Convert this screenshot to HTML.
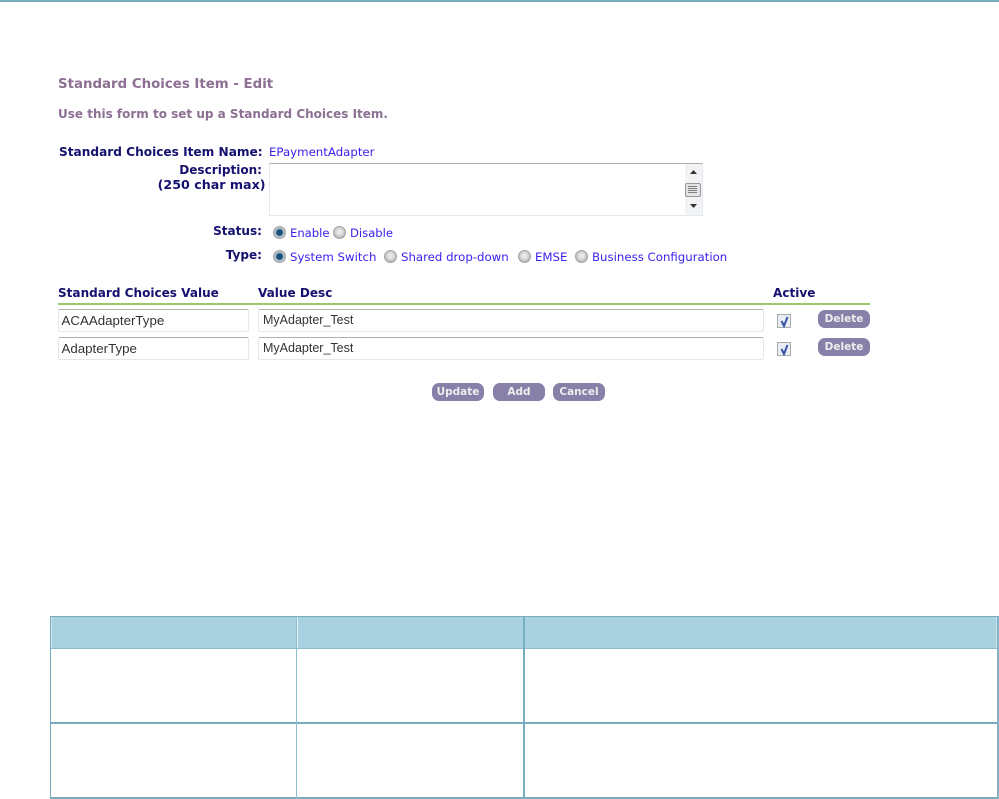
<!DOCTYPE html>
<html><head><meta charset="utf-8"><style>
html,body{margin:0;padding:0;background:#fff;width:999px;height:799px;overflow:hidden}
.a{position:absolute;white-space:nowrap;line-height:14px}
.v{font-family:"DejaVu Sans",Verdana,sans-serif}
.t{font-weight:bold;font-size:12px;color:#8c6f92;}
.l{font-weight:bold;font-size:12.05px;color:#16106e;}
.b{font-size:11.75px;color:#3a22f0;}
.i{position:absolute;box-sizing:border-box;background:#fff;border:1px solid #e4e8ee;border-top:1px solid #b0b0b0;border-radius:2px;height:23px;font-family:"Liberation Sans",sans-serif;font-size:13.3px;color:#333;line-height:22px;padding-left:2.5px;white-space:nowrap}
.btn{position:absolute;box-sizing:border-box;height:18px;width:52px;background:#8880a8;border-radius:7px;color:#eee;font:bold 10.5px/18px "DejaVu Sans",sans-serif;text-align:center}
.r{position:absolute;width:13px;height:13px;border-radius:50%;box-sizing:border-box;border:1px solid #a0a5a5;background:radial-gradient(circle at 50% 45%,#e8e8e8 0 2px,#c4c4c4 5px,#b0b0b0 6px)}
.r.on{background:radial-gradient(circle,#174f75 0 2.5px,#5f96b4 3.5px,#c9cdcd 4.5px,#a8acac 6px)}
.c{position:absolute;width:14px;height:14px;box-sizing:border-box;border:1px solid #a9acae;background:#e9ecf3}
.c svg{position:absolute;left:1px;top:1px}
.g{position:absolute}
</style></head><body>
<div class="g" style="left:0;top:0;width:999px;height:2px;background:#76aec0"></div>

<div class="a v t" style="left:58px;top:78px;font-size:13.35px">Standard Choices Item - Edit</div>
<div class="a v t" style="left:58px;top:107px">Use this form to set up a Standard Choices Item.</div>

<div class="a v l" style="left:59px;top:145px;font-size:12.15px">Standard Choices Item Name:</div>
<div class="a v b" style="left:269px;top:145px">EPaymentAdapter</div>
<div class="a v l" style="right:737px;top:163px">Description:</div>
<div class="a v l" style="right:733.5px;top:178px;font-size:12.65px">(250 char max)</div>

<div class="g" style="left:269px;top:163px;width:434px;height:53px;box-sizing:border-box;border:1px solid #e4e8ee;border-top:1px solid #b0b0b0;background:#fff"></div>
<div class="g" style="left:685px;top:164px;width:17px;height:51px;background:#f2f3f4"></div>
<svg class="g" style="left:685px;top:164px" width="17" height="51" viewBox="0 0 17 51">
<path d="M5 10h7l-3.5-4z" fill="#333"/><path d="M5 40h7l-3.5 4z" fill="#333"/>
<rect x="0.5" y="19.5" width="15" height="13" rx="1.5" fill="#e2e3e4" stroke="#9a9a9a"/>
<path d="M3 22.5h9M3 24.5h9M3 26.5h9M3 28.5h9" stroke="#808080" stroke-width="1"/>
</svg>

<div class="a v l" style="right:737px;top:224px">Status:</div>
<div class="r on" style="left:273px;top:226px"></div>
<div class="a v b" style="left:290px;top:226px;font-size:11.6px">Enable</div>
<div class="r" style="left:333px;top:226px"></div>
<div class="a v b" style="left:350px;top:226px;font-size:11.6px">Disable</div>

<div class="a v l" style="right:737px;top:248px">Type:</div>
<div class="r on" style="left:273px;top:250px"></div>
<div class="a v b" style="left:290px;top:250px">System Switch</div>
<div class="r" style="left:384px;top:250px"></div>
<div class="a v b" style="left:401px;top:250px">Shared drop-down</div>
<div class="r" style="left:518px;top:250px"></div>
<div class="a v b" style="left:535px;top:250px">EMSE</div>
<div class="r" style="left:575px;top:250px"></div>
<div class="a v b" style="left:592px;top:250px">Business Configuration</div>

<div class="a v l" style="left:58px;top:286px">Standard Choices Value</div>
<div class="a v l" style="left:258px;top:286px">Value Desc</div>
<div class="a v l" style="left:773px;top:286px">Active</div>
<div class="g" style="left:58px;top:303px;width:812px;height:2px;background:#9acb68"></div>

<div class="i" style="left:58px;top:309px;width:191px">ACAAdapterType</div>
<div class="i" style="left:258px;top:309px;width:506px;font-size:12.5px;padding-left:4px;line-height:21px">MyAdapter_Test</div>
<div class="c" style="left:777px;top:314px"><svg width="12" height="12" viewBox="0 0 12 12"><path d="M2.5 5L5 10 8.5 1" fill="none" stroke="#3a55a8" stroke-width="2"/></svg></div>
<div class="btn" style="left:818px;top:310px">Delete</div>

<div class="i" style="left:58px;top:337px;width:191px">AdapterType</div>
<div class="i" style="left:258px;top:337px;width:506px;font-size:12.5px;padding-left:4px;line-height:21px">MyAdapter_Test</div>
<div class="c" style="left:777px;top:342px"><svg width="12" height="12" viewBox="0 0 12 12"><path d="M2.5 5L5 10 8.5 1" fill="none" stroke="#3a55a8" stroke-width="2"/></svg></div>
<div class="btn" style="left:818px;top:338px">Delete</div>

<div class="btn" style="left:432px;top:383px">Update</div>
<div class="btn" style="left:493px;top:383px">Add</div>
<div class="btn" style="left:553px;top:383px">Cancel</div>

<!-- table -->
<div class="g" style="left:50px;top:616px;width:949px;height:33px;background:#a9d2e0"></div>
<div class="g" style="left:50px;top:616px;width:949px;height:1px;background:#76aec0"></div>
<div class="g" style="left:50px;top:648px;width:949px;height:1px;background:#8fbdcd"></div>
<div class="g" style="left:50px;top:722px;width:949px;height:2px;background:#76aec0"></div>
<div class="g" style="left:50px;top:797px;width:949px;height:2px;background:#76aec0"></div>
<div class="g" style="left:50px;top:616px;width:1px;height:183px;background:#76aec0"></div>
<div class="g" style="left:51px;top:617px;width:1px;height:31px;background:#cfe6ee"></div>
<div class="g" style="left:296px;top:616px;width:1px;height:183px;background:#8fbdcd"></div>
<div class="g" style="left:297px;top:617px;width:1px;height:31px;background:#e6f3f7"></div>
<div class="g" style="left:523px;top:616px;width:2px;height:183px;background:#76aec0"></div>
<div class="g" style="left:997px;top:616px;width:2px;height:183px;background:#80b4c6"></div>
<div class="g" style="left:996px;top:617px;width:1px;height:31px;background:#cfe6ee"></div>
</body></html>
